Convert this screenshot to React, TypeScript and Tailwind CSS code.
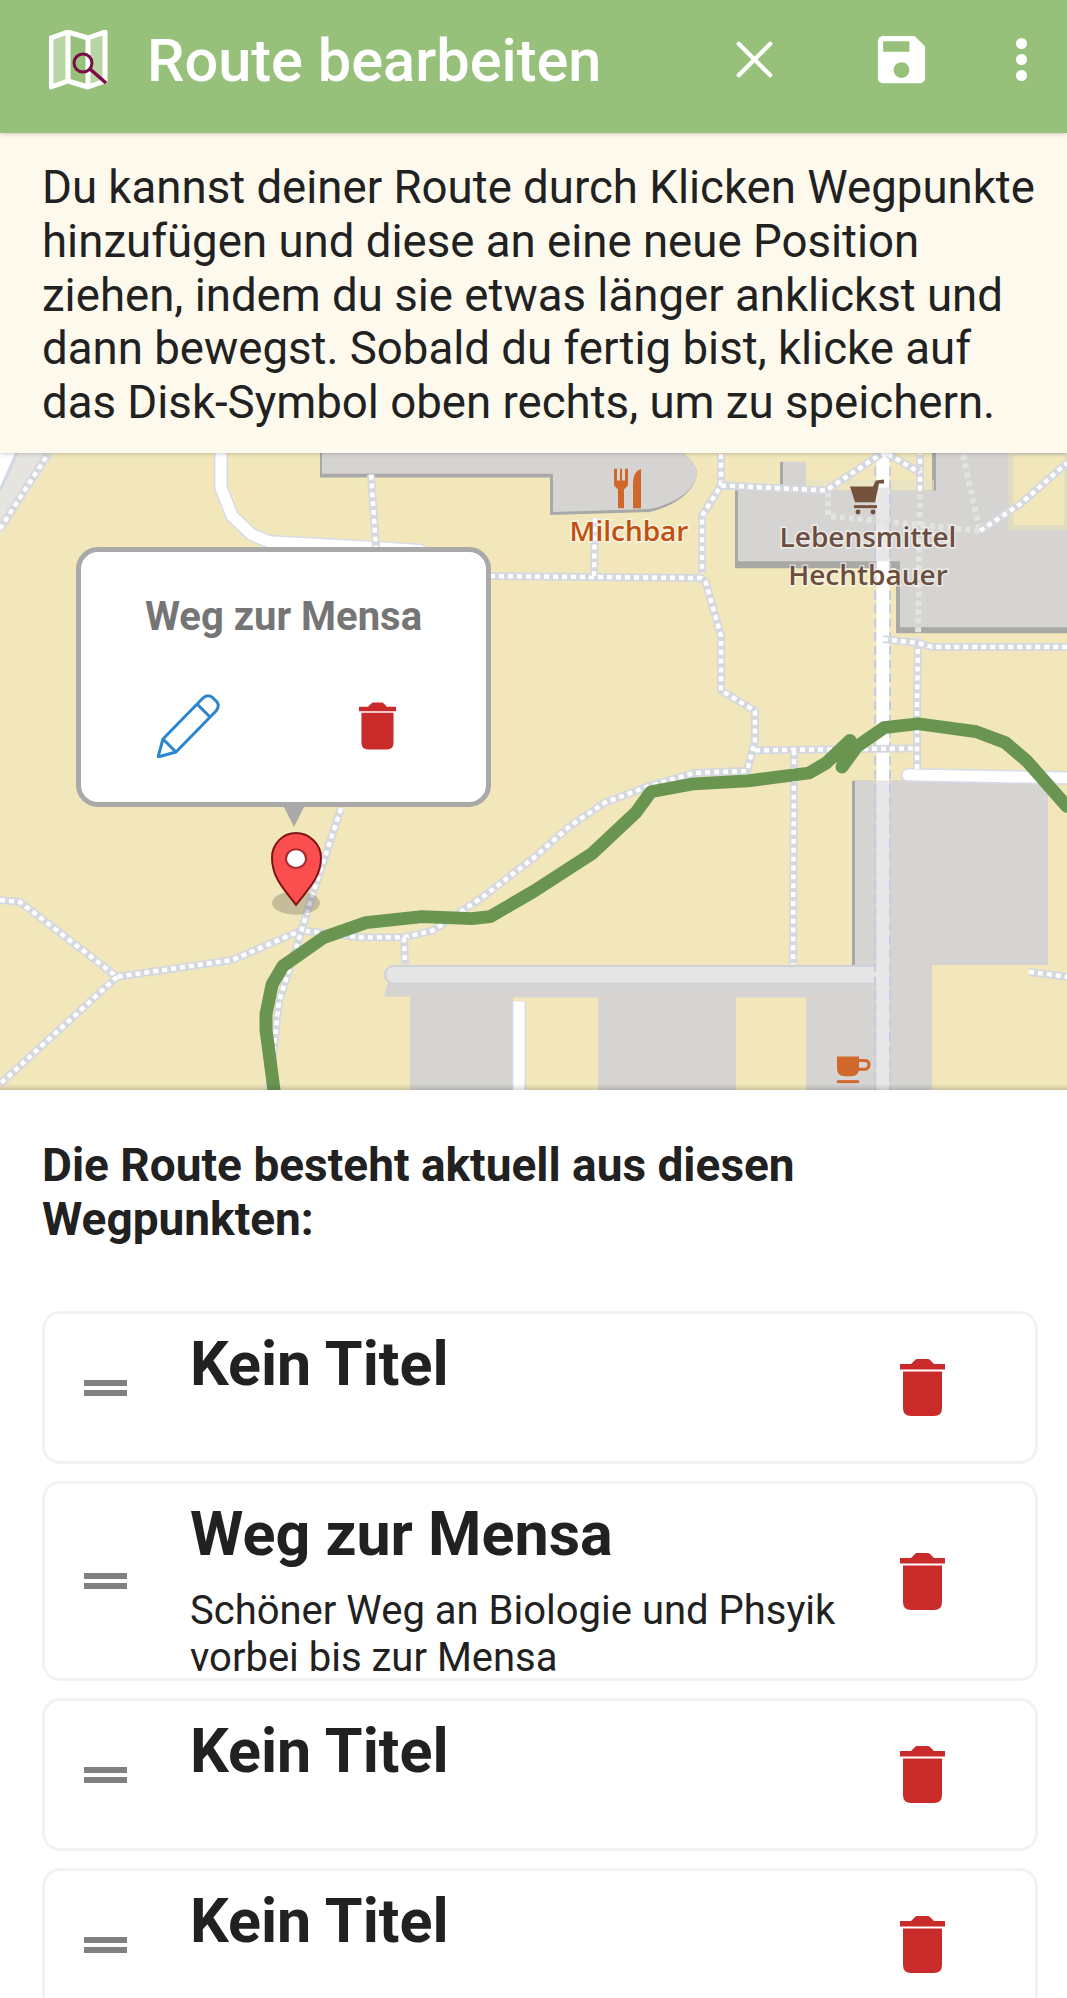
import { X } from "lucide-react";

// Route editor screen: app bar, hint text, map with popup, waypoint list.

const ROADS = [
  "M221 453 L221 488 L232 517 L252 536 L269 543 L375 549 L420 552",
  "M908 780 L1067 783",
];

const PATHS = [
  "M0 530 L48 454",
  "M371 475 L376 549",
  "M490 578 L701 580 L706 585 L721 639 L721 694 L755 715 L755 745 L747 776 L694 778 L650 791 L605 808 L571 831 L534 864 L484 903 L433 938 L404 945 L361 945 L301 938",
  "M721 454 L721 486 L702 517 L702 575",
  "M594 578 L595 519",
  "M755 755 L915 753",
  "M917 774 L917 711 L918 644",
  "M920 491 L920 454",
  "M883 642 L918 646 L932 650 L1067 650",
  "M794 755 L793 972",
  "M721 486 L826 491 L881 454",
  "M888 454 L920 473",
  "M980 532 L1020 505 L1067 463",
  "M1029 980 L1067 985",
  "M0 907 L20 909 L117 985 L232 968 L301 938",
  "M117 985 L0 1094",
  "M341 814 L313 900 L300 943 L279 1010 L269 1100",
  "M404 945 L405 972",
];

// paths running under a building show only faintly
const FAINT_PATHS = ["M828 493 V517 L980 532", "M963 455 L980 532", "M918 644 L920 491"];

const ROUTE =
  "M274 1100 L266 1039 L266 1023 L272 993 L283 974 L324 945 L366 930 L422 924 L472 926 L490 924 L534 898 L592 860 L636 818 L651 797 L694 789 L748 786 L809 778 L826 768 L850 745 L842 772 L857 751 L884 732 L918 728 L976 736 L1005 747 L1027 766 L1067 812";

const TrashIcon = ({ className }: { className: string }) => (
  <svg viewBox="0 0 45 57" className={className} fill="#c92a2a">
    <path d="M0 5 H11 L15 1 Q16 0 17 0 H28 Q29 0 30 1 L34 5 H45 V10.5 H0 Z" />
    <path d="M3 12.5 H42 V49 Q42 57 34 57 H11 Q3 57 3 49 Z" />
  </svg>
);

const LogoIcon = () => (
  <svg viewBox="49 30 60 60" className="w-[60px] h-[60px] shrink-0">
    <path d="M51 38 L68 32 V80 L51 86 Z" fill="#b9d5a3" />
    <path d="M88 38 L105 32 V80 L88 86 Z" fill="#b9d5a3" />
    <path
      d="M51 38 L68 32 L88 38 L105 32 V81 L88 87 L68 81 L51 87 Z M68 32 V81 M88 38 V87"
      fill="none"
      stroke="#fff"
      strokeWidth="5"
      strokeLinejoin="round"
    />
    <circle cx="83" cy="63" r="9" fill="none" stroke="#7b0a47" strokeWidth="3" />
    <path d="M90 69 L106 83" stroke="#7b0a47" strokeWidth="3.5" />
  </svg>
);

const MapCanvas = () => (
  <svg viewBox="0 453 1067 647" preserveAspectRatio="none" className="block w-full h-full">
    <rect x="0" y="453" width="1067" height="647" fill="#f1e7bb" />

    {/* top left corner: grey square edge and a white road */}
    <path d="M0 453 H55 L0 537 Z" fill="#e5e4df" />
    <path d="M0 453 H15 L0 488 Z" fill="#ffffff" />
    <path d="M17 453 L0 491" stroke="#d3d7e6" strokeWidth="3" />

    {/* buildings, dark edge first */}
    <g fill="#a8a8a6">
      <path d="M320 453 V478 H550 V516 L650 513 Q690 502 697 476 Q697 462 682 453 Z" />
      <path d="M735 491 V570 H896 V636 H1067 V531 L1009 531 V453 H932 V491 Z" />
      <path d="M852 786 V973 H1048 V786 Z" />
      <path d="M780 462 H784 V491 H780 Z" />
    </g>
    <g fill="#d5d4d2">
      <path d="M322 453 V474 H553 V513 L650 510 Q690 500 697 476 Q697 462 682 453 Z" />
      <path d="M738 491 V563 H900 V630 H1067 V531 L1009 531 V453 H936 V491 Z" />
      <path d="M855 786 V973 H1048 V786 Z" />
      <path d="M783 462 H806 V491 H783 Z" />
      <path d="M384 1005 L388 990 H878 V973 H932 V1100 H806 V1006 H736 V1100 H598 V1006 H513 V1100 H410 V1005 Z" />
    </g>
    <path d="M1011 453 V529 H1067 V453 Z" fill="#f1e7bb" stroke="#e0dcc2" strokeWidth="5" />
    <path d="M806 480 H934 V491 H806 Z" fill="#e8e3c8" fillOpacity="0.6" />

    {/* covered walkway */}
    <path d="M394 983 H878" stroke="#cfd0da" strokeWidth="20" strokeLinecap="round" />
    <path d="M394 983 H878" stroke="#e5e5e5" strokeWidth="16" strokeLinecap="round" />

    {/* roads */}
    {ROADS.map((d) => (
      <g key={d} fill="none" strokeLinecap="round">
        <path d={d} stroke="#d7dbe8" strokeWidth="14" />
        <path d={d} stroke="#ffffff" strokeWidth="11" />
      </g>
    ))}
    <path d="M519 1010 V1100" stroke="#d7dbe8" strokeWidth="14" fill="none" />
    <path d="M519 1010 V1100" stroke="#ffffff" strokeWidth="11" fill="none" />
    <path d="M883 453 V786" stroke="#ffffff" strokeWidth="13" />
    <path d="M883 488 V563 M883 786 V1100" stroke="#e7e7e7" strokeWidth="13" />
    <path
      d="M875 453 V1100 M890 453 V1100"
      stroke="#c5cbe0"
      strokeWidth="2"
      strokeDasharray="9 5"
    />

    {/* footpaths */}
    {FAINT_PATHS.map((d) => (
      <path key={d} d={d} fill="none" stroke="#e3e3e0" strokeWidth="6" strokeDasharray="5 4" />
    ))}
    {PATHS.map((d) => (
      <g key={d} fill="none" strokeLinejoin="round">
        <path d={d} stroke="#d6d8e0" strokeWidth="8" />
        <path d={d} stroke="#ffffff" strokeWidth="4.5" strokeDasharray="5 4" />
      </g>
    ))}

    {/* route */}
    <path
      d={ROUTE}
      fill="none"
      stroke="#6a9550"
      strokeWidth="13"
      strokeLinejoin="round"
      strokeLinecap="round"
    />

    {/* fork and knife */}
    <g fill="#d0682c">
      <path d="M614 469 h3 v12 h3 v-12 h2 v12 h3 v-12 h3 v17 l-4 4 v19 h-6 v-19 l-4 -4 Z" />
      <path d="M633 509 V484 Q633 472 641 469 V509 Z" />
    </g>
    {/* cart */}
    <g fill="#73513a">
      <path d="M884 480 L876 481 L873 487 H850 L855 503 H875 L879 484 H884 Z" />
      <path d="M854 506 H877 V509 H854 Z" />
      <circle cx="858" cy="513" r="2.5" />
      <circle cx="873" cy="513" r="2.5" />
    </g>
    {/* coffee cup */}
    <g fill="#d0682c">
      <path d="M837 1066 H859 V1078 Q859 1086 851 1086 H845 Q837 1086 837 1078 Z" />
      <path d="M859 1070 H864 Q869 1070 869 1074 Q869 1079 864 1079 H858" fill="none" stroke="#d0682c" strokeWidth="3" />
      <path d="M837 1090 H859 V1093 H837 Z" />
    </g>

    <g
      className="font-['Open_Sans',sans-serif] font-semibold text-[28px]"
      textAnchor="middle"
      stroke="#ffffff"
      strokeOpacity="0.55"
      strokeWidth="3"
      paintOrder="stroke"
    >
      <text x="629" y="542" fill="#c04f10">Milchbar</text>
      <text x="868" y="548" fill="#6b4e3d">Lebensmittel</text>
      <text x="868" y="587" fill="#6b4e3d">Hechtbauer</text>
    </g>

    {/* marker */}
    <ellipse cx="296" cy="910" rx="24" ry="12" fill="#000000" fillOpacity="0.18" />
    <path
      d="M296 912 C284 896 272 884 272 864 C272 850 283 839 296 839 C309 839 321 850 321 864 C321 884 308 896 296 912 Z"
      fill="#fb4f4f"
      stroke="#7f1414"
      strokeWidth="2"
    />
    <ellipse cx="296" cy="865" rx="10" ry="9.5" fill="#ffffff" stroke="#a52a2a" strokeWidth="2" />
  </svg>
);

const Waypoint = ({ title, text, height }: { title: string; text?: string; height: string }) => (
  <div className={`flex items-stretch overflow-hidden border-[3px] border-[#f2f2f2] rounded-[18px] bg-white ${height}`}>
    <div className="w-[145px] shrink-0 flex items-center pl-[39px]">
      <div className="flex flex-col gap-[4px] w-[43px]">
        <div className="h-[6px] bg-[#808080]" />
        <div className="h-[6px] bg-[#808080]" />
      </div>
    </div>
    <div className="flex-1 min-w-0 pt-[15px]">
      <div className="text-[61px] leading-[70px] font-bold text-[#212121]">{title}</div>
      {text && <div className="text-[40px] leading-[47px] text-[#212121] mt-[18px] whitespace-pre-line">{text}</div>}
    </div>
    <div className="shrink-0 flex items-center mr-[90px]">
      <TrashIcon className="w-[45px] h-[57px]" />
    </div>
  </div>
);

export default function App() {
  return (
    <div className="w-[1067px] h-[1998px] overflow-hidden bg-white font-['Roboto',sans-serif] text-[#212121]">
      <header className="relative z-20 h-[133px] bg-[#97c17a] flex items-start shadow-[0_1px_4px_rgba(0,0,0,0.2)]">
        <div className="pl-[49px] pt-[30px]">
          <LogoIcon />
        </div>
        <h1 className="ml-[38px] mt-[29px] text-[59.5px] leading-[64px] font-medium text-white whitespace-nowrap">Route bearbeiten</h1>
        <X className="absolute left-[723px] top-[28px] w-[63px] h-[63px] text-white" strokeWidth={1.6} />
        <svg viewBox="0 0 24 24" className="absolute left-[870px] top-[28px] w-[63px] h-[63px]" fill="#fff">
          <path d="M17 3H5c-1.11 0-2 .9-2 2v14c0 1.1.89 2 2 2h14c1.1 0 2-.9 2-2V7l-4-4zm-5 16c-1.66 0-3-1.34-3-3s1.34-3 3-3 3 1.34 3 3-1.34 3-3 3zm3-10H5V5h10v4z" />
        </svg>
        <div className="absolute left-[1016px] top-[38px] flex flex-col gap-[5px]">
          <div className="w-[11px] h-[11px] rounded-full bg-white" />
          <div className="w-[11px] h-[11px] rounded-full bg-white" />
          <div className="w-[11px] h-[11px] rounded-full bg-white" />
        </div>
      </header>

      <div className="relative z-10 h-[320px] bg-[#fdf9ed] pl-[42px] pt-[28px] text-[45.6px] leading-[53.8px] shadow-[0_1px_4px_rgba(0,0,0,0.2)]">
        <p className="w-[1000px]">
          Du kannst deiner Route durch Klicken Wegpunkte hinzufügen und diese an eine neue Position ziehen, indem du sie
          etwas länger anklickst und dann bewegst. Sobald du fertig bist, klicke auf das Disk-Symbol oben rechts, um zu
          speichern.
        </p>
      </div>

      <div className="relative h-[637px] overflow-hidden">
        <MapCanvas />
        <div className="absolute left-[76px] top-[94px] w-[415px] h-[260px] bg-white border-[5px] border-[#a9a9a9] rounded-[22px] flex flex-col items-center">
          <div className="mt-[43px] text-[40px] leading-[44px] font-bold text-[#757575]">Weg zur Mensa</div>
          <div className="absolute left-[76px] top-[142px]">
            <svg viewBox="0 0 63 64" className="w-[63px] h-[64px]" fill="none" stroke="#2a86cf" strokeWidth="3" strokeLinejoin="round">
              <path d="M1 63 L6 45 L46 4 Q50 0 55 3 L60 8 Q63 12 59 17 L19 58 Z" />
              <path d="M6 45 L19 58 M40 10 L53 23" />
            </svg>
          </div>
          <div className="absolute left-[278px] top-[150px]">
            <TrashIcon className="w-[37px] h-[48px]" />
          </div>
          <div className="absolute left-[203px] top-[255px] w-0 h-0 border-l-[10px] border-r-[10px] border-t-[20px] border-l-transparent border-r-transparent border-t-[#a9a9a9]" />
        </div>
        <div className="absolute inset-x-0 bottom-0 h-[6px] bg-gradient-to-t from-black/15 to-transparent" />
      </div>

      <section className="pl-[42px] pr-[30px] pt-[48px]">
        <h2 className="text-[46px] leading-[54px] font-bold text-[#212121]">
          Die Route besteht aktuell aus diesen
          <br />
          Wegpunkten:
        </h2>
        <div className="mt-[65px] flex flex-col gap-[17px] w-[996px]">
          <Waypoint title="Kein Titel" height="h-[153px]" />
          <Waypoint
            title="Weg zur Mensa"
            text={"Schöner Weg an Biologie und Phsyik\nvorbei bis zur Mensa"}
            height="h-[200px]"
          />
          <Waypoint title="Kein Titel" height="h-[153px]" />
          <Waypoint title="Kein Titel" height="h-[153px]" />
        </div>
      </section>
    </div>
  );
}
